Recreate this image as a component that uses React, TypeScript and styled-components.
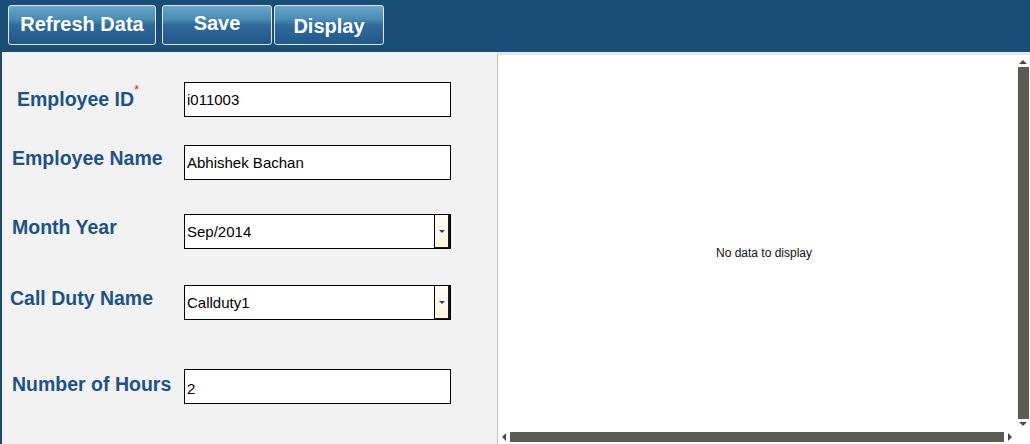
import React from "react";
import styled, { createGlobalStyle } from "styled-components";

const Global = createGlobalStyle`
  html, body { margin: 0; padding: 0; background: #ffffff; }
  body { font-family: "Liberation Sans", Arial, sans-serif; }
`;

const Page = styled.div`
  width: 1030px;
  height: 444px;
  display: flex;
  flex-direction: column;
  overflow: hidden;
`;

const Toolbar = styled.div`
  height: 52px;
  flex: 0 0 52px;
  box-sizing: border-box;
  background: #1a4e77;
  display: flex;
  align-items: flex-start;
  padding: 5px 0 0 8px;
`;

const ToolButton = styled.button<{ $w: number; $gap: number; $textTop: number }>`
  width: ${(p) => p.$w}px;
  height: 40px;
  margin-left: ${(p) => p.$gap}px;
  box-sizing: border-box;
  border: 1px solid #dfe9f1;
  border-radius: 3px;
  background: linear-gradient(
    to bottom,
    #66a6c8 0%,
    #4b8bb5 35%,
    #2f6c9b 50%,
    #2a6394 70%,
    #22578a 100%
  );
  color: #ffffff;
  font-family: "Liberation Sans", Arial, sans-serif;
  font-weight: bold;
  font-size: 20px;
  line-height: 20px;
  padding: ${(p) => p.$textTop}px 0 0 0;
  display: flex;
  justify-content: center;
  align-items: flex-start;
  cursor: pointer;
`;

const Body = styled.div`
  flex: 1;
  display: flex;
  min-height: 0;
`;

const FormPanel = styled.div`
  width: 497px;
  flex: 0 0 497px;
  box-sizing: border-box;
  background: #f2f2f2;
  border-left: 2px solid #1b4b73;
  display: flex;
  flex-direction: column;
`;

const Row = styled.div<{ $top: number }>`
  display: flex;
  align-items: center;
  margin-top: ${(p) => p.$top}px;
  height: 35px;
`;

const Label = styled.div<{ $indent: number; $lift: number }>`
  flex: 0 0 182px;
  box-sizing: border-box;
  padding-left: ${(p) => p.$indent}px;
  margin-bottom: ${(p) => p.$lift}px;
  color: #1e5381;
  font-family: "Liberation Sans", Arial, sans-serif;
  font-weight: bold;
  font-size: 19.5px;
  white-space: nowrap;
  display: flex;
  align-items: flex-start;
`;

const Required = styled.span`
  color: #e8202a;
  font-size: 13px;
  font-weight: normal;
  margin-top: -6px;
  margin-left: 0;
`;

const Field = styled.div`
  width: 267px;
  height: 35px;
  box-sizing: border-box;
  border: 1px solid #000000;
  background: #ffffff;
  display: flex;
  align-items: stretch;
`;

const FieldText = styled.div<{ $drop?: number }>`
  flex: 1;
  display: flex;
  align-items: center;
  padding: ${(p) => p.$drop ?? 0}px 0 0 2px;
  font-family: "Liberation Sans", Arial, sans-serif;
  font-size: 15px;
  color: #000000;
`;

const DropButton = styled.div`
  width: 16px;
  box-sizing: border-box;
  border-left: 1px solid #000000;
  border-right: 2px solid #1a1a1a;
  border-bottom: 1px solid #1a1a1a;
  background: linear-gradient(to bottom, #fffef6 0%, #fdf6dc 100%);
  display: flex;
  align-items: center;
  justify-content: center;
`;

const Arrow = styled.div`
  width: 0;
  height: 0;
  border-left: 3px solid transparent;
  border-right: 3px solid transparent;
  border-top: 3px solid #1f3d7a;
`;

const GridPanel = styled.div`
  flex: 1;
  box-sizing: border-box;
  border-left: 1px solid #c9c9b2;
  border-top: 3px solid #e4e8e8;
  background: #ffffff;
  display: grid;
  grid-template-columns: 1fr 14px;
  grid-template-rows: 1fr 12px;
`;

const Empty = styled.div`
  display: flex;
  align-items: center;
  justify-content: center;
  padding: 18px 0 0 14px;
  font-family: "Liberation Sans", Arial, sans-serif;
  font-size: 12px;
  color: #111111;
`;

const VScroll = styled.div`
  display: flex;
  flex-direction: column;
  align-items: center;
  padding: 5px 0 6px 0;
`;

const HScroll = styled.div`
  display: flex;
  align-items: flex-start;
  padding: 0 4px 0 4px;
`;

const ArrowUp = styled.div`
  width: 0;
  height: 0;
  border-left: 4px solid transparent;
  border-right: 4px solid transparent;
  border-bottom: 4px solid #4a4a45;
`;

const ArrowDown = styled.div`
  width: 0;
  height: 0;
  border-left: 4px solid transparent;
  border-right: 4px solid transparent;
  border-top: 4px solid #4a4a45;
`;

const ArrowLeft = styled.div`
  width: 0;
  height: 0;
  margin-top: 1px;
  border-top: 4px solid transparent;
  border-bottom: 4px solid transparent;
  border-right: 4px solid #4a4a45;
`;

const ArrowRight = styled.div`
  width: 0;
  height: 0;
  margin-top: 1px;
  border-top: 4px solid transparent;
  border-bottom: 4px solid transparent;
  border-left: 4px solid #4a4a45;
`;

const VThumb = styled.div`
  width: 11px;
  flex: 1;
  margin: 3px 0 3px 0;
  background: #5a5b53;
`;

const HThumb = styled.div`
  flex: 1;
  height: 10px;
  margin: 0 4px 0 4px;
  background: #5a5b53;
`;

const Corner = styled.div``;

type FieldRow = {
  label: string;
  value: string;
  top: number;
  indent: number;
  lift: number;
  required?: boolean;
  select?: boolean;
  drop?: number;
};

const rows: FieldRow[] = [
  { label: "Employee ID", value: "i011003", top: 30, indent: 15, lift: 0, required: true },
  { label: "Employee Name", value: "Abhishek Bachan", top: 28, indent: 10, lift: 8 },
  { label: "Month Year", value: "Sep/2014", top: 34, indent: 10, lift: 8, select: true },
  { label: "Call Duty Name", value: "Callduty1", top: 36, indent: 8, lift: 8, select: true },
  { label: "Number of Hours", value: "2", top: 49, indent: 10, lift: 4, drop: 4 },
];

export default function App() {
  return (
    <Page>
      <Global />
      <Toolbar>
        <ToolButton $w={148} $gap={0} $textTop={8}>Refresh Data</ToolButton>
        <ToolButton $w={110} $gap={6} $textTop={7}>Save</ToolButton>
        <ToolButton $w={110} $gap={2} $textTop={10}>Display</ToolButton>
      </Toolbar>
      <Body>
        <FormPanel>
          {rows.map((r) => (
            <Row key={r.label} $top={r.top}>
              <Label $indent={r.indent} $lift={r.lift}>
                {r.label}
                {r.required && <Required>*</Required>}
              </Label>
              <Field>
                <FieldText $drop={r.drop}>{r.value}</FieldText>
                {r.select && (
                  <DropButton>
                    <Arrow />
                  </DropButton>
                )}
              </Field>
            </Row>
          ))}
        </FormPanel>
        <GridPanel>
          <Empty>No data to display</Empty>
          <VScroll>
            <ArrowUp />
            <VThumb />
            <ArrowDown />
          </VScroll>
          <HScroll>
            <ArrowLeft />
            <HThumb />
            <ArrowRight />
          </HScroll>
          <Corner />
        </GridPanel>
      </Body>
    </Page>
  );
}
